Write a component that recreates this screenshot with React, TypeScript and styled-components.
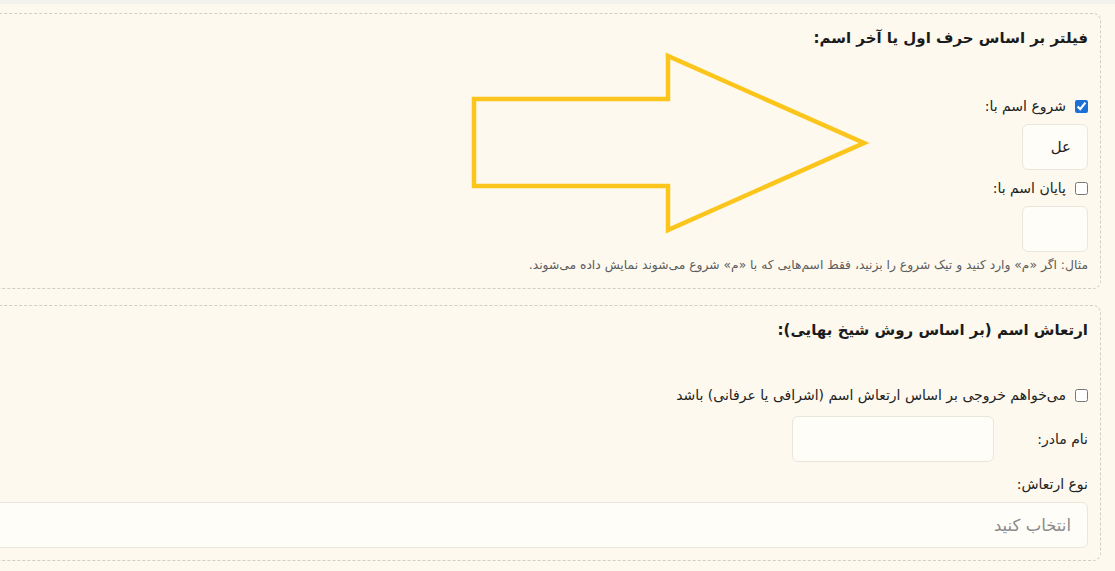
import React from "react";
import styled, { createGlobalStyle } from "styled-components";

const GlobalStyle = createGlobalStyle`
  html, body {
    margin: 0;
    padding: 0;
    background: #fdf9ef;
    overflow: hidden;
  }
  body {
    font-family: "DejaVu Sans", "Noto Sans", sans-serif;
    color: #212121;
  }
`;

const Page = styled.div`
  position: relative;
  direction: rtl;
  width: 1115px;
  height: 571px;
  overflow: hidden;
`;

const TopStrip = styled.div`
  height: 4px;
  background: #f4f2ee;
`;

const Column = styled.div`
  display: flex;
  flex-direction: column;
  align-items: flex-start;
  gap: 16px;
  padding: 9px 14px 0 0;
`;

const Card = styled.section<{ $pt: number; $pb: number }>`
  box-sizing: border-box;
  width: 1300px;
  flex-shrink: 0;
  border: 1px dashed #d3cec4;
  border-radius: 8px;
  padding: ${(p) => `${p.$pt}px 12px ${p.$pb}px 12px`};
  display: flex;
  flex-direction: column;
  align-items: flex-start;
`;

const Title = styled.h3<{ $mb: number }>`
  margin: 0 0 ${(p) => p.$mb}px 0;
  font-size: 15px;
  line-height: 24px;
  font-weight: bold;
  color: #1b1b1b;
`;

const CheckRow = styled.label<{ $mb: number }>`
  display: flex;
  align-items: center;
  gap: 9px;
  height: 20px;
  margin-bottom: ${(p) => p.$mb}px;
  font-size: 14px;
  color: #222;
`;

const Check = styled.input.attrs({ type: "checkbox" })`
  width: 13px;
  height: 13px;
  margin: 0;
  accent-color: #1d6fd8;
`;

const TextBox = styled.input<{ $w: string; $mb: number; $fs?: number }>`
  box-sizing: border-box;
  width: ${(p) => p.$w};
  height: 46px;
  margin: 0 0 ${(p) => p.$mb}px 0;
  padding: 0 16px;
  border: 1px solid #ebe6db;
  border-radius: 6px;
  background: #fffdf8;
  font-family: "DejaVu Sans", sans-serif;
  font-size: ${(p) => p.$fs ?? 14}px;
  color: #222;
  direction: rtl;
  outline: none;
  &::placeholder {
    color: #8a8a8a;
  }
`;

const Hint = styled.p`
  margin: 0;
  font-size: 12.3px;
  line-height: 18px;
  color: #5c5c5c;
`;

const FieldGrid = styled.div`
  display: grid;
  grid-template-columns: 94px 202px;
  align-items: center;
  margin-bottom: 12px;
`;

const FieldLabel = styled.label<{ $mb?: number }>`
  display: block;
  font-size: 14px;
  line-height: 20px;
  color: #222;
  margin-bottom: ${(p) => p.$mb ?? 0}px;
`;

const Arrow = styled.svg`
  position: absolute;
  left: 470px;
  top: 52px;
  width: 400px;
  height: 185px;
  pointer-events: none;
`;

export default function App() {
  return (
    <>
      <GlobalStyle />
      <Page>
        <TopStrip />
        <Column>
          <Card $pt={12} $pb={14}>
            <Title $mb={46}>فیلتر بر اساس حرف اول یا آخر اسم:</Title>
            <CheckRow $mb={8}>
              <Check defaultChecked />
              شروع اسم با:
            </CheckRow>
            <TextBox $w="66px" $mb={8} $fs={15} defaultValue="عل" />
            <CheckRow $mb={8}>
              <Check />
              پایان اسم با:
            </CheckRow>
            <TextBox $w="66px" $mb={4} />
            <Hint>
              مثال: اگر «م» وارد کنید و تیک شروع را بزنید، فقط اسم‌هایی که با «م» شروع می‌شوند نمایش داده می‌شوند.
            </Hint>
          </Card>
          <Card $pt={12} $pb={12}>
            <Title $mb={43}>ارتعاش اسم (بر اساس روش شیخ بهایی):</Title>
            <CheckRow $mb={11}>
              <Check />
              می‌خواهم خروجی بر اساس ارتعاش اسم (اشرافی یا عرفانی) باشد
            </CheckRow>
            <FieldGrid>
              <FieldLabel>نام مادر:</FieldLabel>
              <TextBox $w="202px" $mb={0} />
            </FieldGrid>
            <FieldLabel $mb={8}>نوع ارتعاش:</FieldLabel>
            <TextBox $w="100%" $mb={0} $fs={16.5} placeholder="انتخاب کنید" />
          </Card>
        </Column>
        <Arrow viewBox="0 0 400 185">
          <polygon
            points="4,47 198,47 198,4 394,91 198,178 198,134 4,134"
            fill="none"
            stroke="#fcc51c"
            strokeWidth="4.5"
            strokeLinejoin="miter"
          />
        </Arrow>
      </Page>
    </>
  );
}
